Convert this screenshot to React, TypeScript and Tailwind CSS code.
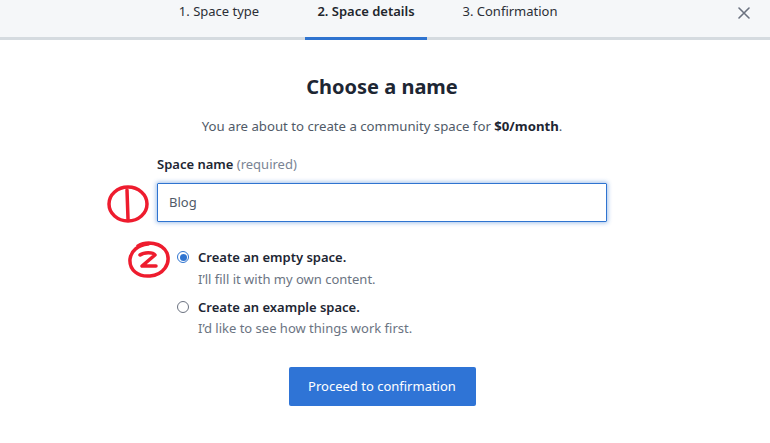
import React from "react";

export default function App() {
  const font = { fontFamily: '"Noto Sans", "Open Sans", Arial, sans-serif' };
  return (
    <div className="w-[770px] h-[443px] bg-white overflow-hidden" style={font}>
      <div className="h-[40px] bg-[#f5f7f9] border-b-[3px] border-[#d5dbe0] flex items-stretch pl-[158px] relative">
        <div className="w-[122px] flex justify-center pt-[2px] text-[13px] text-[#2b2f36]">1. Space type</div>
        <div className="w-[122px] ml-[25px] flex justify-center pt-[2px] text-[13px] font-semibold text-[#22262d] relative">
          2. Space details
          <div className="absolute left-0 right-0 bottom-[-3px] h-[3px] bg-[#2f74d0]" />
        </div>
        <div className="w-[122px] ml-[22px] flex justify-center pt-[2px] text-[13px] text-[#2b2f36]">3. Confirmation</div>
        <div className="ml-auto mr-[20px] pt-[6px]">
          <svg width="12" height="12" viewBox="0 0 12 12" className="mt-[1px]">
            <path d="M1 1L11 11M11 1L1 11" stroke="#6b7280" strokeWidth="1.6" strokeLinecap="round" />
          </svg>
        </div>
      </div>

      <div className="flex justify-center pr-[6px]">
        <div className="w-[450px] flex flex-col items-stretch relative">
          <h1 className="text-center text-[20px] font-bold text-[#1d2633] mt-[33px] leading-[28px]">Choose a name</h1>
          <p className="text-center text-[13.2px] text-[#505a68] mt-[16px] leading-[18px]">
            You are about to create a community space for <span className="font-bold text-[#1d2633]">$0/month</span>.
          </p>
          <label className="mt-[20px] text-[13px] font-semibold text-[#1d2633] leading-[18px]">
            Space name <span className="font-normal text-[#7a8494]">(required)</span>
          </label>
          <div className="mt-[10px] h-[39px] border border-[#2f74d0] shadow-[0_0_4px_1px_rgba(47,116,208,0.45)] rounded-[1px] flex items-center px-[11px] text-[13px] text-[#505a68]">
            Blog
          </div>
          <svg className="absolute left-[-51px] top-[144px]" width="46" height="42" viewBox="0 0 46 42">
            <ellipse cx="22" cy="20" rx="19" ry="17" fill="none" stroke="#ee1c2e" strokeWidth="3.5" />
            <path d="M21 6 L22 35" stroke="#ee1c2e" strokeWidth="3.5" strokeLinecap="round" />
          </svg>
          <svg className="absolute left-[-31px] top-[199px]" width="46" height="42" viewBox="0 0 46 42">
            <path d="M12 7 C20 2 36 3 41 14 C45 25 37 36 24 37 C12 38 3 31 4 20 C5 12 12 6 22 5" fill="none" stroke="#ee1c2e" strokeWidth="3.5" strokeLinecap="round" />
            <path d="M14 16 C18 13 27 13 29 16 L16 27 L30 27" fill="none" stroke="#ee1c2e" strokeWidth="3.5" strokeLinecap="round" strokeLinejoin="round" />
          </svg>

          <div className="mt-[26px] ml-[20px] flex flex-col gap-[10px]">
            <div className="flex">
              <div className="w-[12px] h-[12px] rounded-full border border-[#2f74d0] flex items-center justify-center mt-[3px]">
                <div className="w-[7px] h-[7px] rounded-full bg-[#2f74d0]" />
              </div>
              <div className="ml-[9px]">
                <div className="text-[13px] font-semibold text-[#1d2633] leading-[18px]">Create an empty space.</div>
                <div className="text-[13px] text-[#6b7482] leading-[18px] mt-[4px]">I’ll fill it with my own content.</div>
              </div>
            </div>
            <div className="flex">
              <div className="w-[12px] h-[12px] rounded-full border border-[#6b7280] mt-[3px]" />
              <div className="ml-[9px]">
                <div className="text-[13px] font-semibold text-[#1d2633] leading-[18px]">Create an example space.</div>
                <div className="text-[13px] text-[#6b7482] leading-[18px] mt-[3px]">I’d like to see how things work first.</div>
              </div>
            </div>
          </div>

          <div className="flex justify-center mt-[30px]">
            <button className="w-[187px] h-[39px] bg-[#2f74d6] rounded-[2px] text-white text-[13px]">Proceed to confirmation</button>
          </div>
        </div>
      </div>
    </div>
  );
}
